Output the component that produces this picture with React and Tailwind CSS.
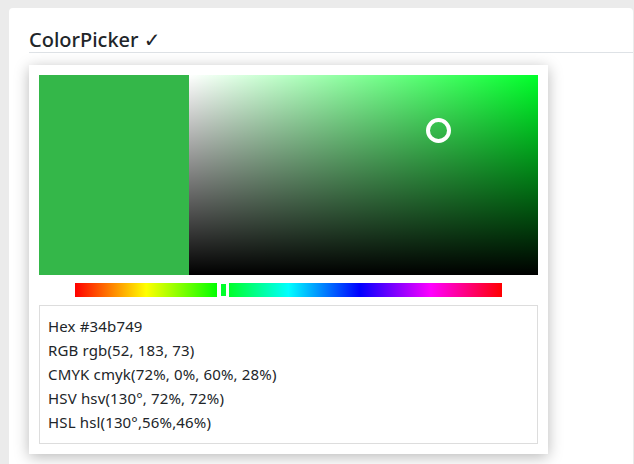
import React from 'react';

const color = {
  hex: '#34b749',
  rgb: 'rgb(52, 183, 73)',
  cmyk: 'cmyk(72%, 0%, 60%, 28%)',
  hsv: 'hsv(130°, 72%, 72%)',
  hsl: 'hsl(130°,56%,46%)',
};

const App = () => {
  const rows = [
    ['Hex', color.hex],
    ['RGB', color.rgb],
    ['CMYK', color.cmyk],
    ['HSV', color.hsv],
    ['HSL', color.hsl],
  ];

  return (
    <div className="min-h-screen bg-[#ebebeb] pt-[8px] text-[#212529] [font-family:'Noto_Sans','Open_Sans',sans-serif]">
      <div className="ml-[9px] mr-px min-h-[456px] rounded-t-[4px] bg-white pl-[20px]">
        <div className="flex h-[45px] items-end border-b border-[#dee2e6]">
          <h2 className="text-[20px] font-medium leading-6">
            ColorPicker <span className="font-normal [font-family:'DejaVu_Sans',sans-serif]">✓</span>
          </h2>
        </div>

        <div className="mt-[12px] w-[519px] bg-white p-[10px] shadow-[0_3px_14px_rgba(0,0,0,0.28)]">
          {/* preview + saturation area */}
          <div className="flex h-[200px]">
            <div className="w-[150px] bg-[#34b749]" />
            <div className="relative flex-1 bg-[#00ff2a]">
              <div className="absolute inset-0 bg-gradient-to-r from-white to-transparent" />
              <div className="absolute inset-0 bg-gradient-to-b from-transparent to-black" />
              <div className="absolute left-[237px] top-[43px] h-[25px] w-[25px] rounded-full border-[4px] border-white" />
            </div>
          </div>

          {/* hue slider */}
          <div className="relative ml-[36px] mt-[8px] h-[14px] w-[427px] bg-[linear-gradient(to_right,#ff0000,#ffff00,#00ff00,#00ffff,#0000ff,#ff00ff,#ff0000)]">
            <div className="absolute left-[142px] top-0 flex h-[14px] w-[12px] items-center justify-center bg-white">
              <div className="h-[12px] w-[5px] bg-[#00ff2a]" />
            </div>
          </div>

          {/* values */}
          <div className="mt-[8px] border border-[#dddddd] px-[8px] pb-[9px] pt-[8px] text-[15px] leading-6 tracking-[0.15px]">
            {rows.map(([label, value]) => (
              <div key={label}>
                {label} {value}
              </div>
            ))}
          </div>
        </div>
      </div>
    </div>
  );
};

export default App;
